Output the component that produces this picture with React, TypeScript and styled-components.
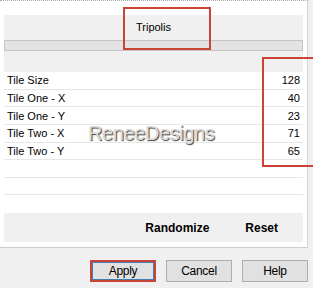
import React from "react";
import styled, { createGlobalStyle } from "styled-components";

const colors = {
  face: "#f0f0f0",
  pane: "#ffffff",
  line: "#e6e6e6",
  mark: "#c94437",
  btn: "#e1e1e1",
  btnBorder: "#adadad",
};

const GlobalStyle = createGlobalStyle`
  html, body {
    margin: 0;
    padding: 0;
    background: ${colors.face};
  }
  body {
    font-family: "Liberation Sans", Arial, sans-serif;
    font-size: 11px;
    color: #000;
  }
`;

const Dialog = styled.div`
  position: relative;
  width: 313px;
  height: 288px;
  overflow: hidden;
`;

const Pane = styled.div`
  box-sizing: border-box;
  width: 308px;
  height: 248px;
  background: ${colors.pane};
  border-top: 1px dotted #a8a8a8;
  border-right: 1px solid #d6d6d6;
  border-bottom: 1px solid #cdcdcd;
  padding: 14px 4px 0 4px;
`;

const Header = styled.div`
  height: 57px;
  background: ${colors.face};
  display: flex;
  flex-direction: column;
  align-items: center;
`;

const Title = styled.div`
  height: 25px;
  line-height: 25px;
  font-size: 11px;
`;

const Bar = styled.div`
  box-sizing: border-box;
  width: 100%;
  height: 11px;
  background: #e3e3e3;
  border: 1px solid #c4c4c4;
`;

const List = styled.div`
  display: flex;
  flex-direction: column;
`;

const Row = styled.div`
  box-sizing: border-box;
  height: 17.625px;
  display: flex;
  align-items: center;
  justify-content: space-between;
  padding: 0 3px;
  border-bottom: 1px solid ${colors.line};
  &:last-child {
    border-bottom: none;
  }
`;

const Label = styled.span`
  font-size: 11px;
`;

const Value = styled.span`
  font-size: 11px;
`;

const ActionBar = styled.div`
  height: 29px;
  background: ${colors.face};
  display: flex;
  align-items: center;
  justify-content: flex-end;
  gap: 36px;
  padding-right: 25px;
`;

const Action = styled.span`
  font-weight: bold;
  font-size: 12px;
`;

const ButtonRow = styled.div`
  display: flex;
  justify-content: flex-end;
  gap: 10px;
  padding: 12px 5px 0 0;
`;

const Button = styled.button<{ $default?: boolean }>`
  box-sizing: border-box;
  width: 66px;
  height: 22px;
  padding: 0;
  background: ${colors.btn};
  border: ${({ $default }) =>
    $default ? `2px solid ${colors.mark}` : `1px solid ${colors.btnBorder}`};
  box-shadow: ${({ $default }) => ($default ? "inset 0 0 0 1px #3f7fb4" : "none")};
  font-family: "Liberation Sans", Arial, sans-serif;
  font-size: 12px;
  letter-spacing: -0.3px;
  color: #000;
`;

const Mark = styled.div<{ $x: number; $y: number; $w: number; $h: number }>`
  position: absolute;
  left: ${({ $x }) => $x}px;
  top: ${({ $y }) => $y}px;
  width: ${({ $w }) => $w}px;
  height: ${({ $h }) => $h}px;
  box-sizing: border-box;
  border: 2px solid ${colors.mark};
  pointer-events: none;
`;

const Watermark = styled.div`
  position: absolute;
  left: 88px;
  top: 122px;
  font-family: "Liberation Sans", Arial, sans-serif;
  font-size: 20px;
  letter-spacing: -0.4px;
  color: #dadada;
  text-shadow: 1px 1px 1px #3c3c3c, -1px -1px 0 #ffffff;
  pointer-events: none;
`;

const params = [
  { label: "Tile Size", value: 128 },
  { label: "Tile One - X", value: 40 },
  { label: "Tile One - Y", value: 23 },
  { label: "Tile Two - X", value: 71 },
  { label: "Tile Two - Y", value: 65 },
];

export default function App() {
  const rows = [...params, null, null, null];
  return (
    <>
      <GlobalStyle />
      <Dialog>
        <Pane>
          <Header>
            <Title>Tripolis</Title>
            <Bar />
          </Header>
          <List>
            {rows.map((p, i) => (
              <Row key={i}>
                {p && <Label>{p.label}</Label>}
                {p && <Value>{p.value}</Value>}
              </Row>
            ))}
          </List>
          <ActionBar>
            <Action>Randomize</Action>
            <Action>Reset</Action>
          </ActionBar>
        </Pane>
        <ButtonRow>
          <Button $default>Apply</Button>
          <Button>Cancel</Button>
          <Button>Help</Button>
        </ButtonRow>
        <Mark $x={123} $y={7} $w={88} $h={43} />
        <Mark $x={262} $y={57} $w={60} $h={110} />
        <Watermark>ReneeDesigns</Watermark>
      </Dialog>
    </>
  );
}
